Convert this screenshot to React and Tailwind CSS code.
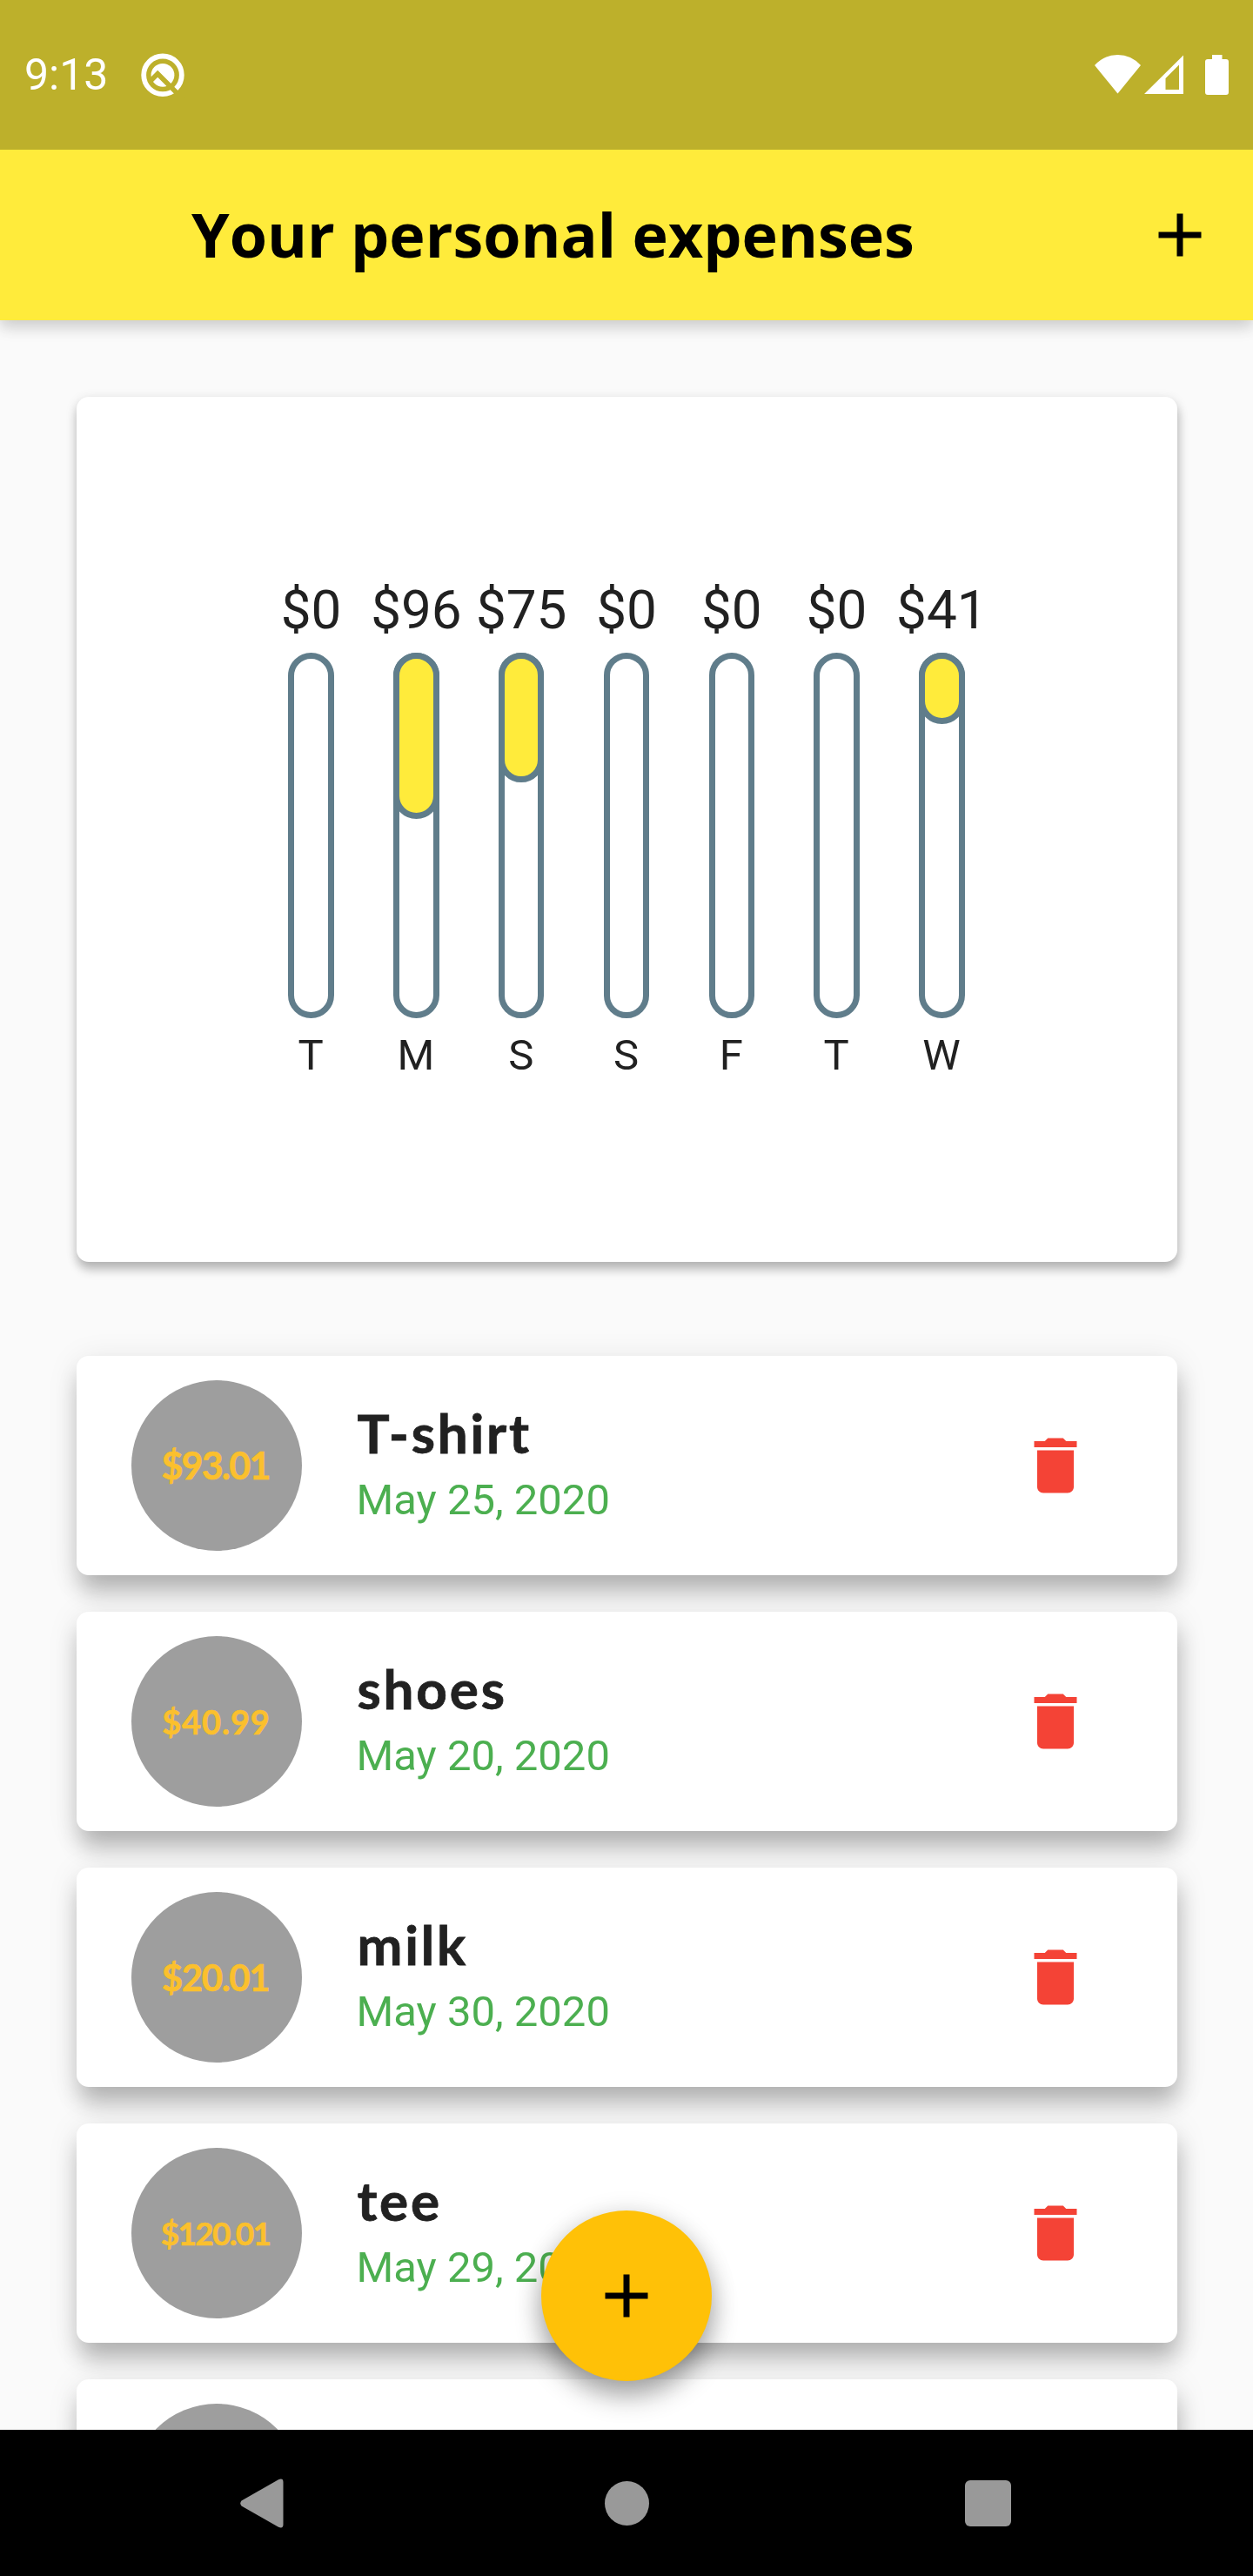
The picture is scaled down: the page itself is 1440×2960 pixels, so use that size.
import { MdAdd, MdDelete } from "react-icons/md";

const days = [
  { amount: "$0", label: "T", fill: 0 },
  { amount: "$96", label: "M", fill: 191 },
  { amount: "$75", label: "S", fill: 149 },
  { amount: "$0", label: "S", fill: 0 },
  { amount: "$0", label: "F", fill: 0 },
  { amount: "$0", label: "T", fill: 0 },
  { amount: "$41", label: "W", fill: 82 },
];

const expenses = [
  { amount: "$93.01", title: "T-shirt", date: "May 25, 2020", size: "text-[43px] tracking-[-1.8px] pr-[2px]" },
  { amount: "$40.99", title: "shoes", date: "May 20, 2020", size: "text-[38px] tracking-[0.9px]" },
  { amount: "$20.01", title: "milk", date: "May 30, 2020", size: "text-[42px] tracking-[-1.4px] pr-[2px]" },
  { amount: "$120.01", title: "tee", date: "May 29, 2020", size: "text-[37px] tracking-[-1.7px] pr-[2px]" },
  { amount: "", title: "", date: "", size: "text-[38px]" },
];

function StatusBar() {
  return (
    <div className="relative z-20 flex h-[172px] shrink-0 items-center bg-[#bdb02b] pl-7 text-white">
      <span className="text-[50px] leading-none">9:13</span>
      <svg className="ml-[37px] size-[52px]" viewBox="0 0 52 52" fill="none">
        <circle cx="26" cy="26.300" r="21.800" stroke="#fff" strokeWidth="5.800" />
        <circle cx="26" cy="26.300" r="13.400" fill="#fff" />
        <path d="M11.500 33.500L20.200 24.800L49 53.600" stroke="#bdb02b" strokeWidth="5.600" />
      </svg>
      <svg className="mr-7 ml-auto h-[46px] w-[154px]" viewBox="1258 63 154 46" fill="#fff">
        <path d="M1284.500 107.500L1258 75Q1269 63 1284.500 63T1311 75Z" />
        <path fillRule="evenodd" d="M1315 108L1360 63.500V108ZM1339.500 103H1355V74.500L1339.500 90Z" />
        <path d="M1393 63H1404.500V68H1409Q1412 68 1412 71V106Q1412 109 1409 109H1388Q1385 109 1385 106V71Q1385 68 1388 68H1393Z" />
      </svg>
    </div>
  );
}

function AppBar() {
  return (
    <header className="relative z-10 flex h-[196px] shrink-0 items-center justify-between bg-[#ffeb3b] pr-[42px] pl-[220px] text-black shadow-[0_9px_16px_rgba(0,0,0,0.13),0_4px_20px_rgba(0,0,0,0.08)]">
      <h1 className="-mt-[2px] font-['Open_Sans'] text-[70px] leading-none font-bold">Your personal expenses</h1>
      <MdAdd className="size-[84px]" />
    </header>
  );
}

function Chart() {
  return (
    <section className="mx-[87.5px] mt-[87.5px] flex h-[994px] shrink-0 justify-center rounded-[14px] bg-white pt-[209px] text-[#212121] shadow-[1px_9px_12px_rgba(0,0,0,0.22),0_3px_14px_rgba(0,0,0,0.12)]">
      {days.map((d, i) => (
        <div key={i} className="flex w-[120.8px] flex-col items-center">
          <span className="text-[62px] leading-[72px] whitespace-nowrap">{d.amount}</span>
          <div className="mt-[13px] h-[420px] w-[52.5px] rounded-full border-[7px] border-[#607d8b]">
            {d.fill > 0 && (
              <div className="-mx-[7px] -mt-[7px] rounded-full border-[7px] border-[#607d8b] bg-[#ffeb3b]" style={{ height: d.fill }} />
            )}
          </div>
          <span className="mt-[14px] pr-px text-[49px] leading-[57px]">{d.label}</span>
        </div>
      ))}
    </section>
  );
}

function ExpenseCard({ amount, title, date, size }) {
  return (
    <li className="flex h-[252px] shrink-0 items-center rounded-[14px] bg-white pr-[98px] pl-[63px] shadow-[2px_21px_26px_-2px_rgba(0,0,0,0.24),1px_6px_36px_rgba(0,0,0,0.1)]">
      <div className={`flex size-[196px] items-center justify-center rounded-full bg-[#9e9e9e] font-['Lato'] font-bold text-[#fbc02d] [-webkit-text-stroke:0.6px_#fbc02d] ${size}`}>
        {amount}
      </div>
      <div className="ml-[63px] flex grow flex-col">
        <span className="-mt-[2px] mb-[3px] pl-px font-['Lato'] text-[62px] leading-[78px] font-bold tracking-[2.8px] text-[#212121] [-webkit-text-stroke:0.8px_#212121]">{title}</span>
        <span className="text-[49px] leading-[72px] text-[#4caf50]">{date}</span>
      </div>
      <MdDelete className="size-[84px] text-[#f44336]" />
    </li>
  );
}

function NavBar() {
  return (
    <nav className="relative z-10 flex h-[168px] shrink-0 items-center justify-between bg-black pr-[278.5px] pl-[275.5px]">
      <svg className="h-[57px] w-[50px]" viewBox="0 0 50 57" fill="#999">
        <path d="M1.500 25.500L44 1.200Q49.500-1 49.500 4V53Q49.500 58 44 55.800L1.500 31.500Q-1 28.500 1.500 25.500Z" />
      </svg>
      <div className="ml-[6px] size-[51px] rounded-full bg-[#999]" />
      <div className="size-[53px] rounded-[6px] bg-[#999]" />
    </nav>
  );
}

export default function App() {
  return (
    <div className="relative flex h-[2960px] w-[1440px] flex-col overflow-hidden bg-[#fafafa] font-['Roboto',sans-serif]">
      <StatusBar />
      <AppBar />
      <main className="flex min-h-0 grow flex-col overflow-hidden">
        <Chart />
        <ul className="mx-[87.5px] mt-[108.5px] flex flex-col gap-[42px]">
          {expenses.map((e, i) => (
            <ExpenseCard key={i} {...e} />
          ))}
        </ul>
      </main>
      <NavBar />
      <button className="absolute bottom-[224px] left-[622px] z-20 flex size-[196px] items-center justify-center rounded-full bg-[#ffc107] text-black shadow-[0_18px_30px_rgba(0,0,0,0.3),0_4px_30px_rgba(0,0,0,0.14)]">
        <MdAdd className="size-[84px]" />
      </button>
    </div>
  );
}
